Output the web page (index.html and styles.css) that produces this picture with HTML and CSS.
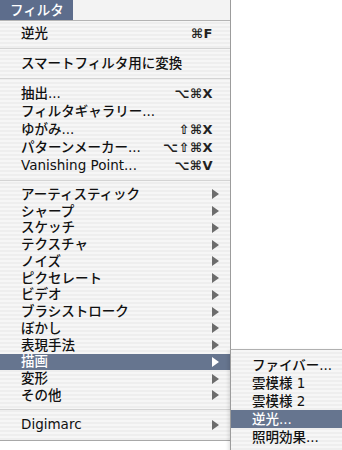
FILE: index.html
```html
<!DOCTYPE html>
<html lang="ja">
<head>
<meta charset="utf-8">
<title>フィルタ</title>
<link rel="stylesheet" href="styles.css">
</head>
<body>
<div class="screen">
  <div class="menu">
    <div class="menubar"><span class="title">フィルタ</span></div>
    <div class="list">
      <div class="item"><span class="label">逆光</span><span class="key">⌘F</span></div>
      <div class="sep"></div>
      <div class="item"><span class="label">スマートフィルタ用に変換</span></div>
      <div class="sep"></div>
      <div class="item"><span class="label">抽出...</span><span class="key">⌥⌘X</span></div>
      <div class="item"><span class="label">フィルタギャラリー...</span></div>
      <div class="item"><span class="label">ゆがみ...</span><span class="key">⇧⌘X</span></div>
      <div class="item"><span class="label">パターンメーカー...</span><span class="key">⌥⇧⌘X</span></div>
      <div class="item"><span class="label">Vanishing Point...</span><span class="key">⌥⌘V</span></div>
      <div class="sep"></div>
      <div class="group-sub">
        <div class="item sub"><span class="label">アーティスティック</span><span class="arrow"></span></div>
        <div class="item sub"><span class="label">シャープ</span><span class="arrow"></span></div>
        <div class="item sub"><span class="label">スケッチ</span><span class="arrow"></span></div>
        <div class="item sub"><span class="label">テクスチャ</span><span class="arrow"></span></div>
        <div class="item sub"><span class="label">ノイズ</span><span class="arrow"></span></div>
        <div class="item sub"><span class="label">ピクセレート</span><span class="arrow"></span></div>
        <div class="item sub"><span class="label">ビデオ</span><span class="arrow"></span></div>
        <div class="item sub"><span class="label">ブラシストローク</span><span class="arrow"></span></div>
        <div class="item sub"><span class="label">ぼかし</span><span class="arrow"></span></div>
        <div class="item sub"><span class="label">表現手法</span><span class="arrow"></span></div>
        <div class="item sub active"><span class="label">描画</span><span class="arrow"></span></div>
        <div class="item sub"><span class="label">変形</span><span class="arrow"></span></div>
        <div class="item sub"><span class="label">その他</span><span class="arrow"></span></div>
      </div>
      <div class="sep"></div>
      <div class="item"><span class="label">Digimarc</span><span class="arrow"></span></div>
    </div>
  </div>
  <div class="submenu">
    <div class="item"><span class="label">ファイバー...</span></div>
    <div class="item"><span class="label">雲模様 1</span></div>
    <div class="item"><span class="label">雲模様 2</span></div>
    <div class="item active"><span class="label">逆光...</span></div>
    <div class="item"><span class="label">照明効果...</span></div>
  </div>
</div>
</body>
</html>
```
FILE: styles.css
```css
html, body {
  margin: 0;
  padding: 0;
  background: #ffffff;
  overflow: hidden;
}

.screen {
  position: relative;
  width: 342px;
  height: 450px;
  overflow: hidden;
  font-family: "DejaVu Sans", "Noto Sans CJK JP", sans-serif;
  font-size: 13.5px;
  font-weight: 500;
  line-height: 15px;
  color: #111;
}

.menu {
  width: 230px;
  border-right: 1px solid #9c9c9c;
  border-bottom: 1px solid #a8a8a8;
  background: repeating-linear-gradient(to bottom, #f6f6f6 0, #f6f6f6 2px, #eeeeee 2px, #eeeeee 4px);
}

.menubar {
  box-sizing: border-box;
  height: 21px;
  border-bottom: 1px solid #b4b4b4;
  background: #f3f3f3;
  display: flex;
}

.title {
  box-sizing: border-box;
  width: 73px;
  height: 20px;
  padding-left: 10px;
  background: #5d6d8c;
  color: #fff;
  line-height: 20px;
}

.list {
  padding: 3px 0 6px;
}

.item {
  box-sizing: border-box;
  display: flex;
  align-items: center;
  height: 18px;
  padding: 0 11px 0 21px;
  white-space: nowrap;
}

.item.sub {
  height: 16.75px;
}

.label {
  flex: 1;
}

.key {
  margin-right: 6px;
  font-family: "DejaVu Sans", sans-serif;
  font-size: 13px;
  font-weight: 700;
  letter-spacing: 0.5px;
  color: #222;
}

.arrow {
  width: 0;
  height: 0;
  border-left: 7px solid #6c6c6c;
  border-top: 5px solid transparent;
  border-bottom: 5px solid transparent;
}

.active {
  background: #66758f;
  color: #fff;
}

.active .arrow {
  border-left-color: #fff;
}

.sep {
  height: 12px;
  display: flex;
  align-items: center;
}

.sep::before {
  content: "";
  flex: 1;
  height: 1px;
  background: #d4d4d4;
}

.submenu {
  position: absolute;
  left: 230px;
  top: 349px;
  width: 130px;
  padding-top: 6px;
  padding-bottom: 20px;
  border-top: 1px solid #b0b0b0;
  border-left: 1px solid #9c9c9c;
  background: repeating-linear-gradient(to bottom, #f6f6f6 0, #f6f6f6 2px, #eeeeee 2px, #eeeeee 4px);
  box-shadow: -1px 2px 4px rgba(0, 0, 0, 0.15);
}

.submenu .item {
  padding-left: 21px;
}
```
